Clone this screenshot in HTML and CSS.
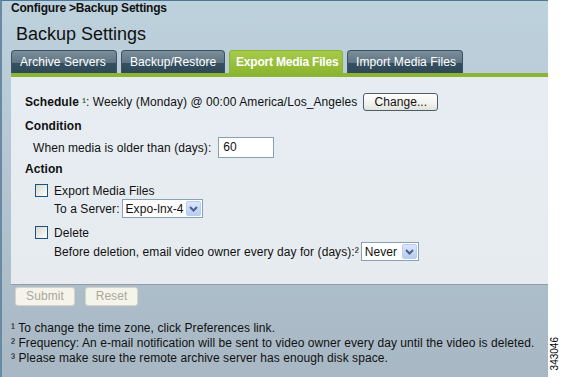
FILE: index.html
```html
<!DOCTYPE html>
<html lang="en">
    <head>
        <meta charset="UTF-8" />
        <meta name="viewport" content="width=device-width, initial-scale=1.0" />
        <title>Backup Settings</title>
        <link rel="stylesheet" href="styles.css">
    </head>
    <body>
        <div class="screen">
            <div class="crumb">Configure &gt;Backup Settings</div>
            <h1 class="title">Backup Settings</h1>

            <ul class="tabs">
                <li class="tab tab-archive">Archive Servers</li>
                <li class="tab tab-backup">Backup/Restore</li>
                <li class="tab tab-export active">Export Media Files</li>
                <li class="tab tab-import">Import Media Files</li>
            </ul>

            <div class="panel">
                <div class="row row-schedule">
                    <span class="label"><b>Schedule</b> <span class="note">¹</span>: Weekly (Monday) @ 00:00 America/Los_Angeles</span>
                    <span class="btn">Change...</span>
                </div>
                <div class="head head-condition">Condition</div>
                <div class="row row-older">
                    <span class="label">When media is older than (days):</span>
                    <span class="field">60</span>
                </div>
                <div class="head head-action">Action</div>
                <div class="row row-check row-export">
                    <span class="check"></span>
                    <span class="label">Export Media Files</span>
                </div>
                <div class="row row-sub row-server">
                    <span class="label">To a Server:</span>
                    <span class="select select-server">
                        <span class="select-text">Expo-lnx-4</span>
                        <span class="arrow"><svg width="15" height="15" viewBox="0 0 15 15"><path d="M4 6 L7.5 9.5 L11 6" fill="none" stroke="#4d6185" stroke-width="2"/></svg></span>
                    </span>
                </div>
                <div class="row row-check row-delete">
                    <span class="check"></span>
                    <span class="label">Delete</span>
                </div>
                <div class="row row-sub row-before">
                    <span class="label">Before deletion, email video owner every day for (days):²</span>
                    <span class="select select-never">
                        <span class="select-text">Never</span>
                        <span class="arrow"><svg width="15" height="15" viewBox="0 0 15 15"><path d="M4 6 L7.5 9.5 L11 6" fill="none" stroke="#4d6185" stroke-width="2"/></svg></span>
                    </span>
                </div>
            </div>

            <div class="actions">
                <span class="btn-off btn-submit">Submit</span>
                <span class="btn-off btn-reset">Reset</span>
            </div>

            <div class="notes">
                <p>¹ To change the time zone, click Preferences link.</p>
                <p>² Frequency: An e-mail notification will be sent to video owner every day until the video is deleted.</p>
                <p>³ Please make sure the remote archive server has enough disk space.</p>
            </div>
        </div>
        <div class="strip">
            <span class="fig">343046</span>
        </div>
    </body>
</html>
```

FILE: styles.css
```css
* {
    margin: 0;
    padding: 0;
    box-sizing: border-box;
}
body {
    display: flex;
    height: 377px;
    font-family: "Liberation Sans", Arial, sans-serif;
    font-size: 12px;
    letter-spacing: 0.07px;
    color: #111;
    background-color: white;
}
ul {
    list-style: none;
}

.screen {
    width: 548px;
    height: 377px;
    border-top: 1px solid #4a7896;
    border-left: 2px solid #6a8aa3;
    padding-left: 9px;
    background: linear-gradient(#bed2de, #b3c6d2 45%, #a8b7c4);
}

.crumb {
    font-weight: bold;
    letter-spacing: -0.2px;
    line-height: 14px;
}
.title {
    font-size: 18px;
    font-weight: normal;
    letter-spacing: 0;
    line-height: 22px;
    margin-top: 8px;
    padding-left: 5px;
}

.tabs {
    display: flex;
    gap: 4px;
    margin-top: 5px;
    height: 23px;
}
.tab {
    height: 23px;
    line-height: 22px;
    padding-left: 8px;
    white-space: nowrap;
    color: white;
    border: 1px solid #3a5262;
    border-bottom: none;
    border-radius: 4px 4px 0 0;
    background: linear-gradient(#7b8e9a, #5f7382 55%, #34505f 56%, #2e4858);
}
.tab-archive {
    width: 106px;
}
.tab-backup {
    width: 104px;
}
.tab-export {
    width: 114px;
    padding-left: 6px;
}
.tab-import {
    width: 116px;
}
.tab.active {
    font-weight: bold;
    letter-spacing: -0.2px;
    border-color: #8ab431;
    background: linear-gradient(#a6cb4a, #8db630);
}

.panel {
    border-top: 4px solid #8cb534;
    border-bottom: 1px solid #8e9da8;
    background: linear-gradient(#e6edf2, #e7ebef);
    padding: 16px 0 0 14px;
    height: 212px;
}
.row {
    display: flex;
    align-items: center;
    white-space: nowrap;
}
.row-schedule {
    height: 18px;
}
.note {
    font-size: 11px;
}
.head {
    font-weight: bold;
    line-height: 15px;
}
.head-condition {
    margin-top: 8px;
}
.row-older {
    height: 21px;
    margin-top: 3px;
    padding-left: 8px;
}
.head-action {
    margin-top: 4px;
}
.row-check {
    height: 15px;
    padding-left: 10px;
}
.row-export {
    margin-top: 6px;
}
.row-delete {
    margin-top: 7px;
}
.row-sub {
    height: 19px;
    padding-left: 29px;
}
.row-server {
    margin-top: 1px;
}
.row-before {
    margin-top: 2px;
}

.btn {
    margin-left: 6px;
    width: 75px;
    height: 18px;
    line-height: 16px;
    text-align: center;
    border: 1px solid #4f5d6b;
    border-radius: 3px;
    background: linear-gradient(#ffffff, #f1f1ee 60%, #e2e2dc);
}
.field {
    margin-left: 7px;
    width: 56px;
    height: 21px;
    line-height: 19px;
    padding-left: 4px;
    background-color: white;
    border: 1px solid #8aa0b4;
}
.check {
    width: 13px;
    height: 13px;
    margin-right: 6px;
    border: 1px solid #1c5180;
    background: linear-gradient(135deg, #d9d9d1, #f6f6f2 80%, #ffffff);
}
.select {
    display: flex;
    align-items: center;
    justify-content: space-between;
    height: 19px;
    margin-left: 2px;
    padding: 0 1px 0 3px;
    background-color: white;
    border: 1px solid #8aa0b4;
}
.select-server {
    width: 81px;
}
.select-never {
    width: 58px;
}
.arrow {
    width: 15px;
    height: 15px;
    border: 1px solid #b9cdf0;
    border-radius: 2px;
    background: linear-gradient(#dbe6fb, #b7cdf4);
}
.arrow svg {
    display: block;
    margin: -1px;
}

.actions {
    display: flex;
    gap: 10px;
    margin-top: 2px;
    padding-left: 4px;
}
.btn-off {
    height: 19px;
    line-height: 17px;
    text-align: center;
    color: #aaa899;
    border: 1px solid #d6d4c8;
    border-radius: 3px;
    background-color: #f5f4eb;
}
.btn-submit {
    width: 60px;
}
.btn-reset {
    width: 53px;
}

.notes {
    margin-top: 15px;
}
.notes p {
    line-height: 15px;
}

.strip {
    width: 13px;
    display: flex;
    align-items: flex-end;
    justify-content: center;
    padding-bottom: 7px;
}
.fig {
    writing-mode: vertical-rl;
    transform: rotate(180deg);
    font-size: 10px;
    line-height: 10px;
    letter-spacing: 0;
    color: black;
}
```
